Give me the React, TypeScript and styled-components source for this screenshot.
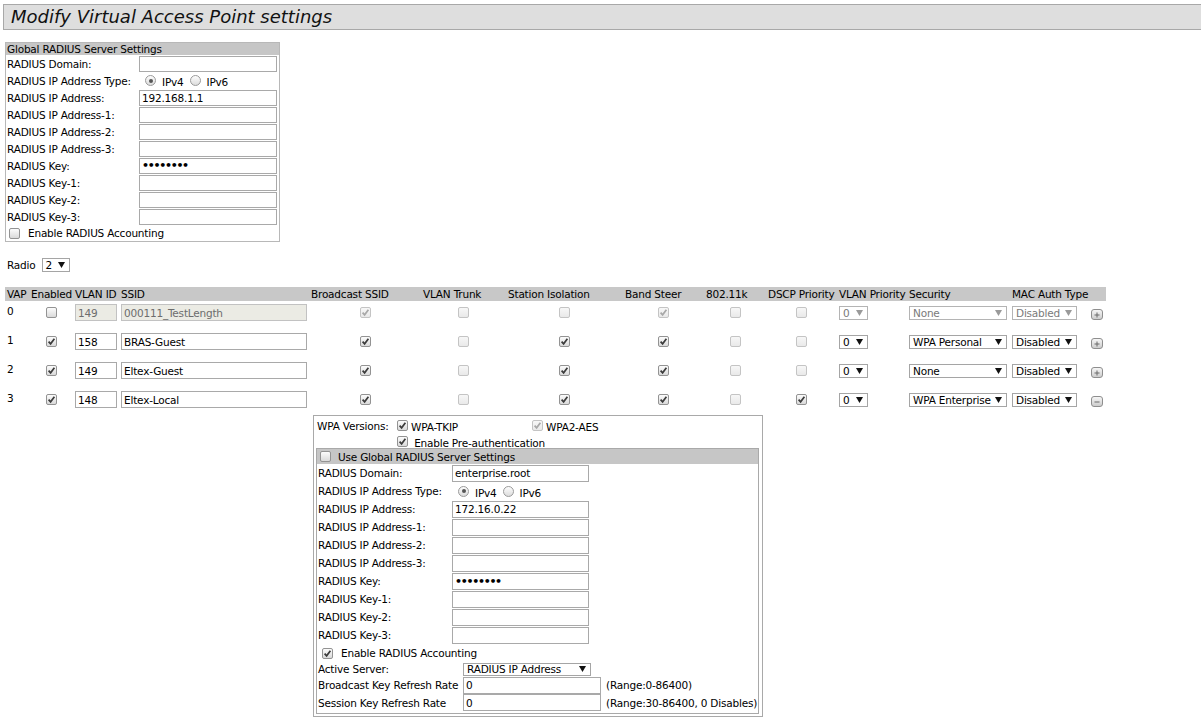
import React from "react";
import styled, { createGlobalStyle } from "styled-components";

const GlobalStyle = createGlobalStyle`
  html, body { margin: 0; padding: 0; background: #fff; }
  body {
    font-family: "DejaVu Sans", Verdana, sans-serif;
    font-size: 10.5px;
    letter-spacing: -0.2px;
    color: #000;
  }
`;

const Page = styled.div`
  padding: 4px 0 8px 3px;
`;

const TitleBar = styled.div`
  height: 24px;
  border: 1px solid #a8a8a8;
  border-right: none;
  background: #dedede;
  padding-left: 7px;
  font-size: 18px;
  font-style: italic;
  letter-spacing: 0;
  line-height: 24px;
  color: #111;
`;

const SettingsBox = styled.div`
  margin: 12px 0 0 2px;
  width: 273px;
  border: 1px solid #b8b8b8;
`;

const BoxHeader = styled.div<{ $h: number; $pad?: number }>`
  display: flex;
  align-items: center;
  gap: 7px;
  height: ${(p) => p.$h}px;
  padding-left: ${(p) => p.$pad ?? 1}px;
  background: #c6c6c6;
  white-space: nowrap;
`;

const FieldGrid = styled.div<{ $label: number; $row: number }>`
  display: grid;
  grid-template-columns: ${(p) => p.$label}px auto;
  grid-auto-rows: ${(p) => p.$row}px;
  align-items: center;
`;

const Label = styled.span`
  padding-left: 1px;
  white-space: nowrap;
`;

const TextField = styled.span<{ $w: number; $h: number; $disabled?: boolean; $dots?: boolean }>`
  box-sizing: border-box;
  display: flex;
  align-items: center;
  width: ${(p) => p.$w}px;
  height: ${(p) => p.$h}px;
  padding: 0 2px;
  border: 1px solid ${(p) => (p.$disabled ? "#c2c2c2" : "#a9a9a9")};
  background: ${(p) => (p.$disabled ? "#ebebe4" : "#fff")};
  color: ${(p) => (p.$disabled ? "#6d6d6d" : "#000")};
  white-space: nowrap;
  overflow: hidden;
  ${(p) => (p.$dots ? "font-size: 11px; font-weight: bold; letter-spacing: -1.3px;" : "")}
`;

const RadioGroup = styled.span`
  display: flex;
  align-items: center;
  padding-left: 6px;
`;

const RadioText = styled.span`
  margin: 3px 6px 0 6px;
`;

const RadioDot = styled.span<{ $on?: boolean }>`
  position: relative;
  display: inline-block;
  box-sizing: border-box;
  width: 11px;
  height: 11px;
  border: 1px solid #9a9a9a;
  border-radius: 50%;
  background: linear-gradient(#fdfdfd, #dcdcdc);
  &::after {
    content: "";
    display: ${(p) => (p.$on ? "block" : "none")};
    position: absolute;
    left: 2.5px;
    top: 2.5px;
    width: 4px;
    height: 4px;
    border-radius: 50%;
    background: #555;
  }
`;

const CheckBox = styled.span<{ $disabled?: boolean }>`
  display: inline-flex;
  align-items: center;
  justify-content: center;
  flex: none;
  box-sizing: border-box;
  width: 11px;
  height: 11px;
  border: 1px solid ${(p) => (p.$disabled ? "#c4c4c4" : "#939393")};
  border-radius: 2px;
  background: ${(p) =>
    p.$disabled ? "linear-gradient(#f7f7f7, #e9e9e9)" : "linear-gradient(#fcfcfc, #dadada)"};
`;

function Check({ on, disabled }: { on?: boolean; disabled?: boolean }) {
  return (
    <CheckBox $disabled={disabled}>
      {on && (
        <svg width="9" height="9" viewBox="0 0 9 9">
          <path
            d="M1.6 4.6 L3.6 6.8 L7.4 1.8"
            fill="none"
            stroke={disabled ? "#a8a8a8" : "#3c3c3c"}
            strokeWidth="1.7"
          />
        </svg>
      )}
    </CheckBox>
  );
}

const CheckLine = styled.div<{ $pad: number; $h: number }>`
  display: flex;
  align-items: center;
  gap: 8px;
  height: ${(p) => p.$h}px;
  padding-left: ${(p) => p.$pad}px;
  white-space: nowrap;
`;

const SelectBox = styled.span<{ $w: number; $h: number; $disabled?: boolean }>`
  box-sizing: border-box;
  display: inline-flex;
  align-items: center;
  justify-content: space-between;
  width: ${(p) => p.$w}px;
  height: ${(p) => p.$h}px;
  padding: 0 4px 0 3px;
  border: 1px solid ${(p) => (p.$disabled ? "#b4b4b4" : "#a5a5a5")};
  background: #fff;
  color: ${(p) => (p.$disabled ? "#7a7a7a" : "#000")};
  white-space: nowrap;
`;

function Select({
  value,
  w,
  h = 14,
  disabled,
}: {
  value: string;
  w: number;
  h?: number;
  disabled?: boolean;
}) {
  return (
    <SelectBox $w={w} $h={h} $disabled={disabled}>
      <span>{value}</span>
      <svg width="7" height="6" viewBox="0 0 7 6">
        <polygon points="0,0 7,0 3.5,6" fill={disabled ? "#9a9a9a" : "#111"} />
      </svg>
    </SelectBox>
  );
}

const RadioRow = styled.div`
  display: flex;
  align-items: center;
  gap: 6px;
  margin: 16px 0 0 4px;
  height: 14px;
`;

const COLS = [24, 44, 46, 190, 112, 85, 117, 81, 62, 71, 70, 103, 79, 17];

const TableRow = styled.div<{ $h: number; $head?: boolean; $pad?: number }>`
  display: grid;
  grid-template-columns: ${COLS.map((c) => c + "px").join(" ")};
  height: ${(p) => p.$h}px;
  align-items: ${(p) => (p.$head ? "center" : "start")};
  padding-top: ${(p) => p.$pad ?? (p.$head ? 0 : 3)}px;
  box-sizing: border-box;
  background: ${(p) => (p.$head ? "#c8c8c8" : "transparent")};
  white-space: nowrap;
`;

const VapTable = styled.div`
  margin: 15px 0 0 2px;
  width: ${COLS.reduce((a, b) => a + b, 0)}px;
`;

const HeadCell = styled.span`
  padding-left: 2px;
`;

const Cell = styled.span<{ $center?: boolean; $pad?: number }>`
  display: flex;
  align-items: center;
  height: 17px;
  justify-content: ${(p) => (p.$center ? "center" : "flex-start")};
  padding-left: ${(p) => (p.$center ? 0 : p.$pad ?? 2)}px;
`;

const NumCell = styled(Cell)`
  align-items: flex-start;
  padding-top: 1px;
  box-sizing: border-box;
`;

const RowButton = styled.span`
  display: inline-flex;
  align-items: center;
  justify-content: center;
  box-sizing: border-box;
  width: 12px;
  height: 11px;
  margin-top: 4px;
  border: 1px solid #8e8e8e;
  border-radius: 3px;
  background: linear-gradient(#f6f6f6, #cdcdcd);
`;

function PlusMinus({ minus }: { minus?: boolean }) {
  return (
    <RowButton>
      <svg width="6" height="6" viewBox="0 0 6 6">
        <rect x="0.5" y="2.5" width="5" height="1" fill="#6a6a6a" />
        {!minus && <rect x="2.5" y="0.5" width="1" height="5" fill="#6a6a6a" />}
      </svg>
    </RowButton>
  );
}

const WpaCell = styled.div`
  grid-column: 5 / -1;
  margin-left: 4px;
`;

const WpaBox = styled.div`
  box-sizing: border-box;
  width: 450px;
  border: 1px solid #a9a9a9;
  padding: 1px 4px 2px 2px;
`;

const VersionsGrid = styled.div`
  display: grid;
  grid-template-columns: 81px 135px auto;
  grid-template-rows: 17px 14px;
  align-items: center;
  white-space: nowrap;
`;

const Option = styled.span<{ $col?: number }>`
  display: flex;
  align-items: center;
  gap: 3px;
  grid-column: ${(p) => p.$col ?? "auto"};
`;

const OptionText = styled.span`
  margin-top: 3px;
`;

const InnerBox = styled.div`
  box-sizing: border-box;
  width: 443px;
  border: 1px solid #a9a9a9;
  padding-bottom: 2px;
`;

const ActiveGrid = styled.div`
  display: grid;
  grid-template-columns: 146px auto;
  grid-template-rows: 14px 18px 17px;
  align-items: center;
  white-space: nowrap;
`;

const FieldWithNote = styled.span`
  display: flex;
  align-items: center;
  gap: 5px;
`;

const globalFields: [string, string][] = [
  ["RADIUS IP Address:", "192.168.1.1"],
  ["RADIUS IP Address-1:", ""],
  ["RADIUS IP Address-2:", ""],
  ["RADIUS IP Address-3:", ""],
];

const keyFields = ["RADIUS Key-1:", "RADIUS Key-2:", "RADIUS Key-3:"];

type Vap = {
  id: string;
  enabled: boolean;
  vlan: string;
  ssid: string;
  flags: [boolean, boolean, boolean, boolean, boolean, boolean];
  security: string;
  locked?: boolean;
  minus?: boolean;
};

const vaps: Vap[] = [
  {
    id: "0",
    enabled: false,
    vlan: "149",
    ssid: "000111_TestLength",
    flags: [true, false, false, true, false, false],
    security: "None",
    locked: true,
  },
  {
    id: "1",
    enabled: true,
    vlan: "158",
    ssid: "BRAS-Guest",
    flags: [true, false, true, true, false, false],
    security: "WPA Personal",
  },
  {
    id: "2",
    enabled: true,
    vlan: "149",
    ssid: "Eltex-Guest",
    flags: [true, false, true, true, false, false],
    security: "None",
  },
  {
    id: "3",
    enabled: true,
    vlan: "148",
    ssid: "Eltex-Local",
    flags: [true, false, true, true, false, true],
    security: "WPA Enterprise",
    minus: true,
  },
];

const headers = [
  "VAP",
  "Enabled",
  "VLAN ID",
  "SSID",
  "Broadcast SSID",
  "VLAN Trunk",
  "Station Isolation",
  "Band Steer",
  "802.11k",
  "DSCP Priority",
  "VLAN Priority",
  "Security",
  "MAC Auth Type",
  "",
];

function IpTypeRadios() {
  return (
    <RadioGroup>
      <RadioDot $on />
      <RadioText>IPv4</RadioText>
      <RadioDot />
      <RadioText>IPv6</RadioText>
    </RadioGroup>
  );
}

function GlobalRadius() {
  return (
    <SettingsBox>
      <BoxHeader $h={12}>Global RADIUS Server Settings</BoxHeader>
      <FieldGrid $label={133} $row={17}>
        <Label>RADIUS Domain:</Label>
        <TextField $w={138} $h={16} />
        <Label>RADIUS IP Address Type:</Label>
        <IpTypeRadios />
        {globalFields.map(([l, v]) => (
          <React.Fragment key={l}>
            <Label>{l}</Label>
            <TextField $w={138} $h={16}>{v}</TextField>
          </React.Fragment>
        ))}
        <Label>RADIUS Key:</Label>
        <TextField $w={138} $h={16} $dots>
          ••••••••
        </TextField>
        {keyFields.map((l) => (
          <React.Fragment key={l}>
            <Label>{l}</Label>
            <TextField $w={138} $h={16} />
          </React.Fragment>
        ))}
      </FieldGrid>
      <CheckLine $pad={3} $h={16}>
        <Check />
        <span>Enable RADIUS Accounting</span>
      </CheckLine>
    </SettingsBox>
  );
}

function EnterpriseSettings() {
  return (
    <WpaBox>
      <VersionsGrid>
        <Label>WPA Versions:</Label>
        <Option>
          <Check on />
          <OptionText>WPA-TKIP</OptionText>
        </Option>
        <Option>
          <Check on disabled />
          <OptionText>WPA2-AES</OptionText>
        </Option>
        <Option $col={2}>
          <Check on />
          <OptionText>&nbsp;Enable Pre-authentication</OptionText>
        </Option>
      </VersionsGrid>
      <InnerBox>
        <BoxHeader $h={15} $pad={3}>
          <Check />
          <span>Use Global RADIUS Server Settings</span>
        </BoxHeader>
        <FieldGrid $label={135} $row={18}>
          <Label>RADIUS Domain:</Label>
          <TextField $w={137} $h={17}>enterprise.root</TextField>
          <Label>RADIUS IP Address Type:</Label>
          <IpTypeRadios />
          <Label>RADIUS IP Address:</Label>
          <TextField $w={137} $h={17}>172.16.0.22</TextField>
          {["RADIUS IP Address-1:", "RADIUS IP Address-2:", "RADIUS IP Address-3:"].map((l) => (
            <React.Fragment key={l}>
              <Label>{l}</Label>
              <TextField $w={137} $h={17} />
            </React.Fragment>
          ))}
          <Label>RADIUS Key:</Label>
          <TextField $w={137} $h={17} $dots>
            ••••••••
          </TextField>
          {keyFields.map((l) => (
            <React.Fragment key={l}>
              <Label>{l}</Label>
              <TextField $w={137} $h={17} />
            </React.Fragment>
          ))}
        </FieldGrid>
        <CheckLine $pad={5} $h={18}>
          <Check on />
          <span>Enable RADIUS Accounting</span>
        </CheckLine>
        <ActiveGrid>
          <Label>Active Server:</Label>
          <Select value="RADIUS IP Address" w={128} h={13} />
          <Label>Broadcast Key Refresh Rate</Label>
          <FieldWithNote>
            <TextField $w={138} $h={17}>0</TextField>
            <span>(Range:0-86400)</span>
          </FieldWithNote>
          <Label>Session Key Refresh Rate</Label>
          <FieldWithNote>
            <TextField $w={138} $h={17}>0</TextField>
            <span>(Range:30-86400, 0 Disables)</span>
          </FieldWithNote>
        </ActiveGrid>
      </InnerBox>
    </WpaBox>
  );
}

export default function App() {
  return (
    <Page>
      <GlobalStyle />
      <TitleBar>Modify Virtual Access Point settings</TitleBar>
      <GlobalRadius />
      <RadioRow>
        <span>Radio</span>
        <Select value="2" w={28} h={14} />
      </RadioRow>
      <VapTable>
        <TableRow $h={14} $head>
          {headers.map((h, i) => (
            <HeadCell key={i}>{h}</HeadCell>
          ))}
        </TableRow>
        {vaps.map((v, idx) => (
          <TableRow key={v.id} $h={idx === vaps.length - 1 ? 27 : 29}>
            <NumCell>{v.id}</NumCell>
            <Cell $center>
              <Check on={v.enabled} />
            </Cell>
            <Cell>
              <TextField $w={42} $h={17} $disabled={v.locked}>
                {v.vlan}
              </TextField>
            </Cell>
            <Cell>
              <TextField $w={186} $h={17} $disabled={v.locked}>
                {v.ssid}
              </TextField>
            </Cell>
            {v.flags.map((f, i) => (
              <Cell $center key={i}>
                <Check on={f} disabled={v.locked || i === 1 || i === 4 || (i === 5 && !f)} />
              </Cell>
            ))}
            <Cell>
              <Select value="0" w={29} disabled={v.locked} />
            </Cell>
            <Cell>
              <Select value={v.security} w={98} disabled={v.locked} />
            </Cell>
            <Cell>
              <Select value="Disabled" w={65} disabled={v.locked} />
            </Cell>
            <Cell>
              <PlusMinus minus={v.minus} />
            </Cell>
          </TableRow>
        ))}
        <TableRow $h={300} $pad={0}>
          <WpaCell>
            <EnterpriseSettings />
          </WpaCell>
        </TableRow>
      </VapTable>
    </Page>
  );
}
